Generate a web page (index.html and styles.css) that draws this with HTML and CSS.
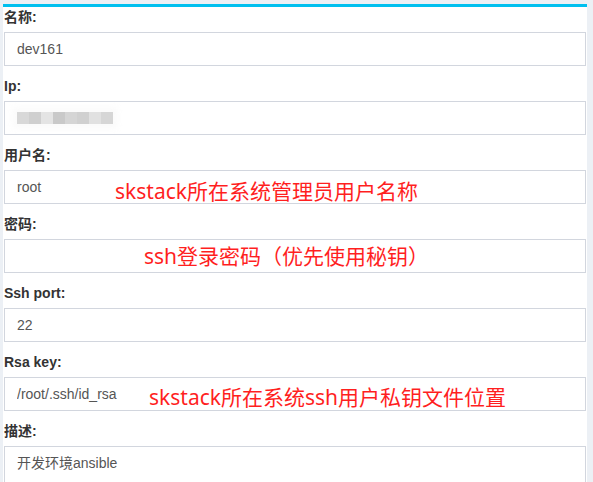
FILE: index.html
```html
<!DOCTYPE html>
<html lang="zh">
<head>
<meta charset="utf-8">
<title>主机编辑</title>
<link rel="stylesheet" href="styles.css">
</head>
<body>
<div class="wrap">
  <form class="box">
    <div class="form-group">
      <label class="lbl">名称:</label>
      <div class="field"><input class="ctl" type="text" value="dev161"></div>
    </div>
    <div class="form-group">
      <label class="lbl">Ip:</label>
      <div class="field">
        <input class="ctl" type="text" value="">
        <div class="mosaic">
          <span class="px p1"></span><span class="px p2"></span><span class="px p3"></span><span class="px p4"></span><span class="px p5"></span><span class="px p6"></span><span class="px p7"></span><span class="px p8"></span>
        </div>
      </div>
    </div>
    <div class="form-group">
      <label class="lbl">用户名:</label>
      <div class="field">
        <input class="ctl" type="text" value="root">
        <span class="note note-user">skstack所在系统管理员用户名称</span>
      </div>
    </div>
    <div class="form-group">
      <label class="lbl">密码:</label>
      <div class="field">
        <input class="ctl" type="password" value="">
        <span class="note note-pass">ssh登录密码（优先使用秘钥）</span>
      </div>
    </div>
    <div class="form-group">
      <label class="lbl">Ssh port:</label>
      <div class="field"><input class="ctl" type="text" value="22"></div>
    </div>
    <div class="form-group">
      <label class="lbl">Rsa key:</label>
      <div class="field">
        <input class="ctl" type="text" value="/root/.ssh/id_rsa">
        <span class="note note-key">skstack所在系统ssh用户私钥文件位置</span>
      </div>
    </div>
    <div class="form-group">
      <label class="lbl">描述:</label>
      <div class="field"><textarea class="ctl area">开发环境ansible</textarea></div>
    </div>
  </form>
</div>
</body>
</html>
```
FILE: styles.css
```css
html, body {
  margin: 0;
  padding: 0;
  background: #ecf0f5;
  font-family: "Liberation Sans", Arial, "Noto Sans CJK SC", sans-serif;
  overflow: hidden;
}
.wrap {
  padding: 4px 6px 0 3px;
}
.box {
  display: block;
  margin: 0;
  background: #fff;
  border-top: 3px solid #00c0ef;
  padding: 0 1px;
}
.form-group {
  margin-bottom: 10px;
}
.lbl {
  display: block;
  font-size: 14px;
  font-weight: bold;
  line-height: 20px;
  color: #333;
  margin-bottom: 5px;
}
.field {
  position: relative;
}
.ctl {
  display: block;
  box-sizing: border-box;
  width: 100%;
  height: 34px;
  margin: 0;
  padding: 6px 12px;
  border: 1px solid #d2d6de;
  border-radius: 0;
  background: #fff;
  font-family: "Liberation Sans", Arial, "Noto Sans CJK SC", sans-serif;
  font-size: 14px;
  line-height: 20px;
  color: #555;
  outline: none;
}
.area {
  height: 70px;
  resize: none;
}
.mosaic {
  position: absolute;
  left: 13px;
  top: 11px;
  display: flex;
  box-shadow: 0 0 6px 4px rgba(250, 250, 250, 0.9);
}
.px {
  display: block;
  width: 12px;
  height: 12px;
}
.p1 { background: #d8d8d8; }
.p2 { background: #cfcfcf; }
.p3 { background: #e4e4e4; }
.p4 { background: #c9c9c9; }
.p5 { background: #d5d5d5; }
.p6 { background: #d0d0d0; }
.p7 { background: #e1e1e1; }
.p8 { background: #d6d6d6; }
.note {
  position: absolute;
  font-family: "Noto Sans", "Noto Sans CJK SC", sans-serif;
  font-size: 21px;
  line-height: 21px;
  color: #ff1f1f;
  white-space: nowrap;
}
.note-user { left: 111px; top: 11px; }
.note-pass { left: 140px; top: 7px; }
.note-key { left: 145px; top: 10px; }
```
